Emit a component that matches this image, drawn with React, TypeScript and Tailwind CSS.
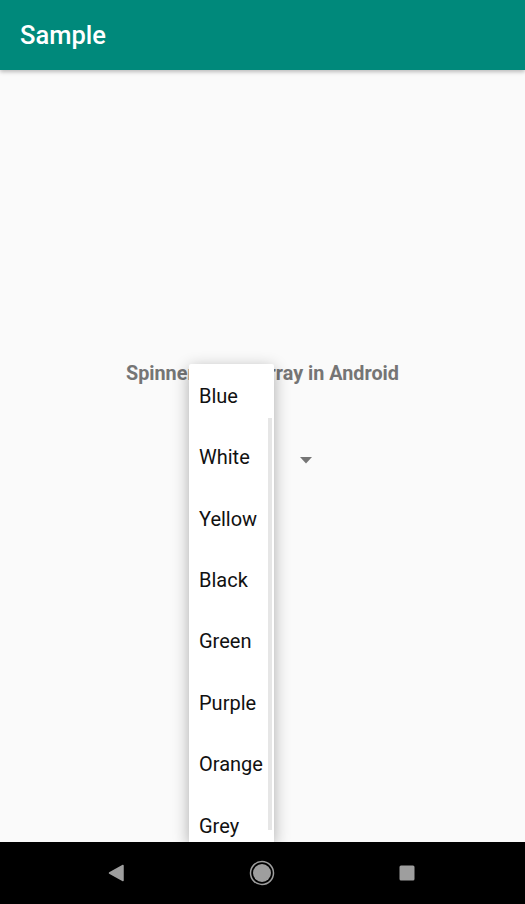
const colors = ['Blue', 'White', 'Yellow', 'Black', 'Green', 'Purple', 'Orange', 'Grey'];

function NavBar() {
  return (
    <div className="h-[62px] bg-black flex items-center shrink-0 relative z-20">
      <div className="w-[175px] flex justify-end pr-[50px]">
        <svg width="18" height="18" viewBox="0 0 18 18">
          <path d="M16 1.5 L16 16.5 L2.5 9 Z" fill="#9e9e9e" stroke="#9e9e9e" strokeWidth="1.5" strokeLinejoin="round" />
        </svg>
      </div>
      <div className="flex-1 flex justify-center pr-[2px]">
        <svg width="26" height="26" viewBox="0 0 26 26">
          <circle cx="13" cy="13" r="11.5" fill="none" stroke="#9e9e9e" strokeWidth="1.5" />
          <circle cx="13" cy="13" r="9" fill="#9e9e9e" />
        </svg>
      </div>
      <div className="w-[175px] flex justify-start pl-[49px]">
        <svg width="16" height="16" viewBox="0 0 16 16">
          <rect x="0.5" y="0.5" width="15" height="15" rx="1.5" fill="#9e9e9e" />
        </svg>
      </div>
    </div>
  );
}

export default function App() {
  return (
    <div className="w-[525px] h-[904px] flex flex-col bg-[#fafafa] relative overflow-hidden" style={{ fontFamily: 'Roboto, "Noto Sans", sans-serif' }}>
      <div className="h-[70px] bg-[#00897b] flex items-center px-5 pt-[2px] shrink-0 shadow-[0_2px_4px_rgba(0,0,0,0.25)] z-10">
        <h1 className="text-white text-[25.5px] font-medium leading-none">Sample</h1>
      </div>

      <div className="flex-1 flex flex-col items-center pt-[292px]">
        <h2 className="text-[#757575] text-[19.8px] font-bold leading-6">Spinner Using Array in Android</h2>
        <div className="mt-[71px] flex items-center pl-[86px]">
          <svg width="12" height="7" viewBox="0 0 12 7">
            <path d="M0 0 L12 0 L6 6.5 Z" fill="#757575" />
          </svg>
        </div>
      </div>

      <NavBar />

      <div className="absolute left-[189px] top-[364px] w-[85px] h-[478px] bg-white rounded-t-[2px] shadow-[0_4px_16px_rgba(0,0,0,0.32)] overflow-hidden pt-px">
        {colors.map((c) => (
          <div key={c} className="h-[61.43px] flex items-center pl-[10px] text-[20px] text-[#111]">
            {c}
          </div>
        ))}
        <div className="absolute left-[79px] top-[54px] w-[4px] h-[412px] bg-[#e6e6e6]" />
      </div>
    </div>
  );
}
